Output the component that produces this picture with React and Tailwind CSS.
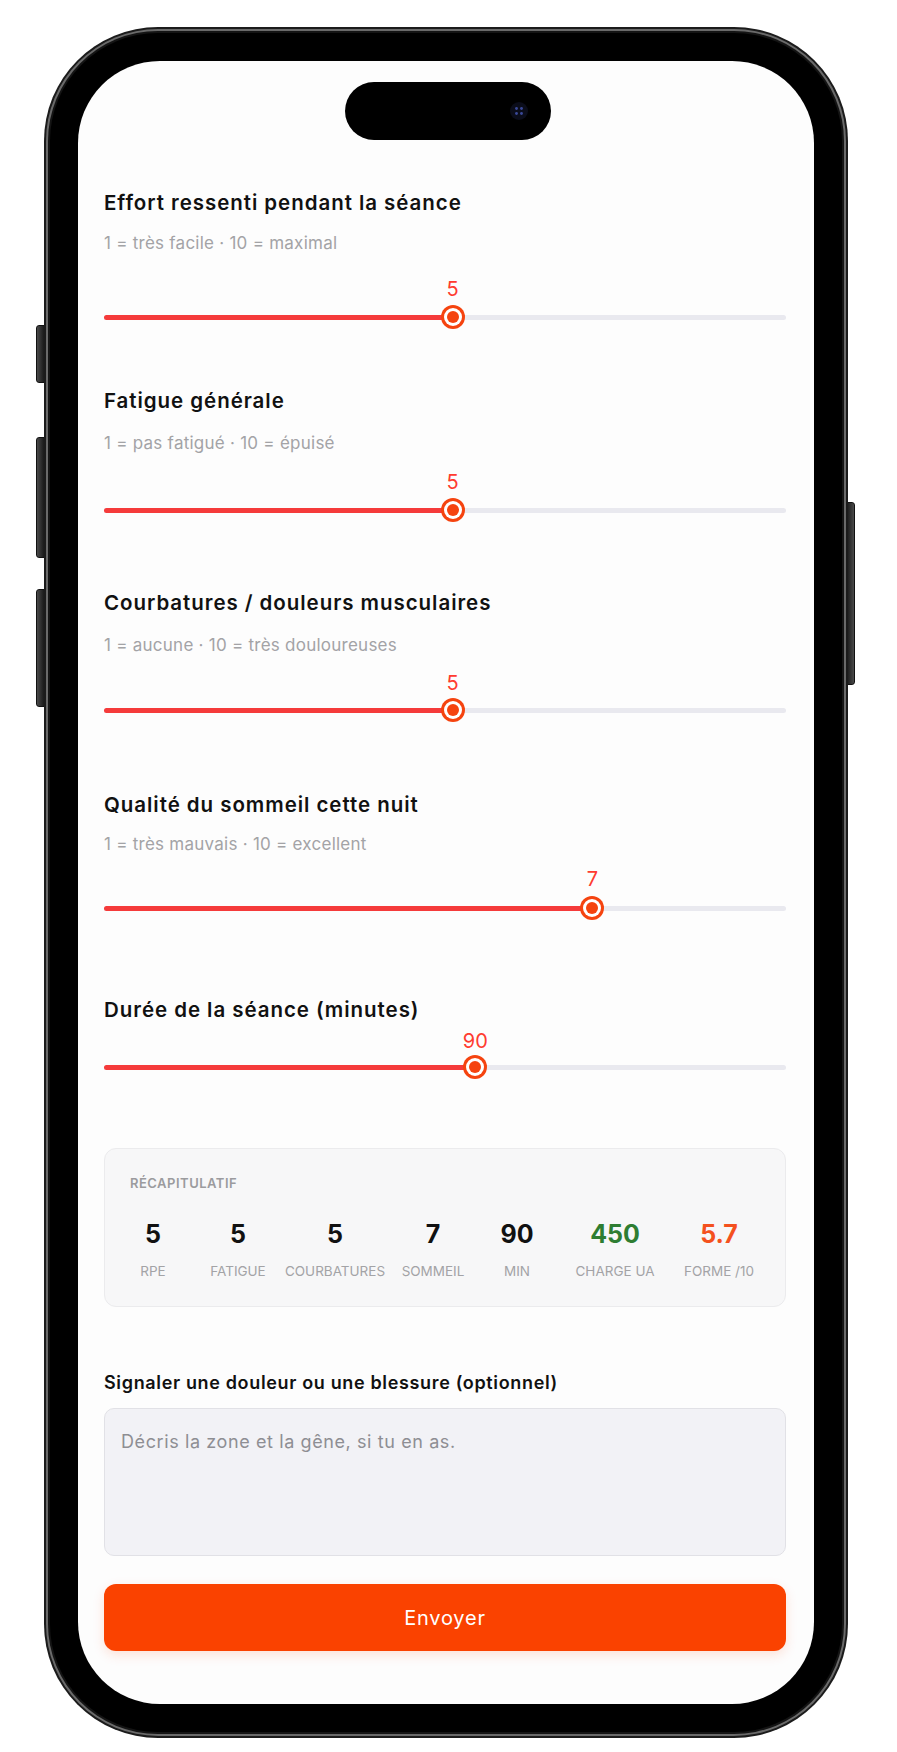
import React from "react";

const FONT = { fontFamily: "Inter, 'Noto Sans', 'Liberation Sans', sans-serif" };

function Slider({ title, sub, value, pct, sectionClass, subClass, valueClass, trackClass }) {
  return (
    <div className={sectionClass}>
      <div className="text-[20.5px] leading-[24px] font-semibold text-[#111111] tracking-[0.95px]">{title}</div>
      {sub && <div className={`${subClass} text-[17px] leading-[20px] tracking-[0.25px] text-[#a3a3a6]`}>{sub}</div>}
      <div className={`${valueClass} relative h-[22px]`}>
        <span
          className="absolute top-0 -translate-x-1/2 text-[20px] leading-[22px] text-[#ff3b30]"
          style={{ left: `${pct}%` }}
        >
          {value}
        </span>
      </div>
      <div className={`${trackClass} relative h-[24px]`}>
        <div className="absolute left-0 right-0 top-[9.5px] h-[5px] rounded-full bg-[#e9e9ef]" />
        <div className="absolute left-0 top-[9.5px] h-[5px] rounded-full bg-[#f53b3b]" style={{ width: `${pct}%` }} />
        <div
          className="absolute top-0 -translate-x-1/2 w-[24px] h-[24px] rounded-full bg-[#f5430f] flex items-center justify-center"
          style={{ left: `${pct}%` }}
        >
          <div className="w-[18px] h-[18px] rounded-full bg-white flex items-center justify-center">
            <div className="w-[12px] h-[12px] rounded-full bg-[#f5430f]" />
          </div>
        </div>
      </div>
    </div>
  );
}

function Stat({ v, label, color }) {
  return (
    <div className="flex flex-col items-center">
      <div className={`text-[25px] leading-[28px] font-bold ${color}`}>{v}</div>
      <div className="mt-[15px] text-[13.5px] leading-[16px] text-[#a3a3a6] whitespace-nowrap">{label}</div>
    </div>
  );
}

export default function App() {
  return (
    <div className="relative w-[897px] h-[1752px] bg-white overflow-hidden" style={FONT}>
      {/* side buttons */}
      <div className="absolute left-[36px] top-[325px] w-[9px] h-[58px] rounded-l-[3px] bg-gradient-to-r from-[#4a4a4a] to-[#1a1a1a] border border-[#111]" />
      <div className="absolute left-[36px] top-[437px] w-[9px] h-[121px] rounded-l-[3px] bg-gradient-to-r from-[#4a4a4a] to-[#1a1a1a] border border-[#111]" />
      <div className="absolute left-[36px] top-[589px] w-[9px] h-[118px] rounded-l-[3px] bg-gradient-to-r from-[#4a4a4a] to-[#1a1a1a] border border-[#111]" />
      <div className="absolute left-[846px] top-[502px] w-[9px] h-[183px] rounded-r-[3px] bg-gradient-to-l from-[#4a4a4a] to-[#1a1a1a] border border-[#111]" />

      <div className="ml-[44px] mt-[27px] w-[804px] h-[1711px] rounded-[114px] bg-[#1b1b1b] p-[2px] relative">
        <div className="w-full h-full rounded-[112px] bg-[#6a6a6a] p-[2px]">
          <div className="w-full h-full rounded-[110px] bg-[#141414] p-[2px]">
            <div className="w-full h-full rounded-[108px] bg-black p-[28px]">
              {/* screen */}
              <div className="w-full h-full rounded-[82px] bg-[#fdfdfd] overflow-hidden flex flex-col">
                {/* dynamic island */}
                <div className="mt-[21px] self-center ml-[3px] w-[206px] h-[58px] rounded-full bg-black flex items-center justify-end pr-[22px]">
                  <svg width="20" height="20" viewBox="0 0 20 20">
                    <circle cx="10" cy="10" r="9" fill="#0b0d1a" />
                    <circle cx="7.5" cy="7.5" r="1.4" fill="#3b4a9a" />
                    <circle cx="12.5" cy="7.5" r="1.4" fill="#3b4a9a" />
                    <circle cx="7.5" cy="12.5" r="1.4" fill="#3b4a9a" />
                    <circle cx="12.5" cy="12.5" r="1.4" fill="#3b4a9a" />
                  </svg>
                </div>

                <div className="pl-[26px] pr-[28px] flex flex-col">
                  <Slider
                    title="Effort ressenti pendant la séance"
                    sub="1 = très facile · 10 = maximal"
                    value="5"
                    pct={51.1}
                    sectionClass="mt-[51px]"
                    subClass="mt-[18px]"
                    valueClass="mt-[25px]"
                    trackClass="mt-[5px]"
                  />
                  <Slider
                    title="Fatigue générale"
                    sub="1 = pas fatigué · 10 = épuisé"
                    value="5"
                    pct={51.1}
                    sectionClass="mt-[60px]"
                    subClass="mt-[20px]"
                    valueClass="mt-[18px]"
                    trackClass="mt-[5px]"
                  />
                  <Slider
                    title="Courbatures / douleurs musculaires"
                    sub="1 = aucune · 10 = très douloureuses"
                    value="5"
                    pct={51.1}
                    sectionClass="mt-[69px]"
                    subClass="mt-[20px]"
                    valueClass="mt-[17px]"
                    trackClass="mt-[4px]"
                  />
                  <Slider
                    title="Qualité du sommeil cette nuit"
                    sub="1 = très mauvais · 10 = excellent"
                    value="7"
                    pct={71.6}
                    sectionClass="mt-[71px]"
                    subClass="mt-[17px]"
                    valueClass="mt-[14px]"
                    trackClass="mt-[6px]"
                  />
                  <Slider
                    title="Durée de la séance (minutes)"
                    value="90"
                    pct={54.45}
                    sectionClass="mt-[78px]"
                    valueClass="mt-[8px]"
                    trackClass="mt-[3px]"
                  />

                  {/* summary card */}
                  <div className="mt-[69px] h-[159px] rounded-[12px] border border-[#ebebed] bg-[#f7f7f8] pt-[26px] px-[11px]">
                    <div className="pl-[14px] text-[13px] leading-[16px] font-semibold tracking-[0.5px] text-[#9b9b9e]">RÉCAPITULATIF</div>
                    <div className="mt-[29px] grid grid-cols-[74px_96px_98px_98px_70px_126px_82px]">
                      <Stat v="5" label="RPE" color="text-[#111111]" />
                      <Stat v="5" label="FATIGUE" color="text-[#111111]" />
                      <Stat v="5" label="COURBATURES" color="text-[#111111]" />
                      <Stat v="7" label="SOMMEIL" color="text-[#111111]" />
                      <Stat v="90" label="MIN" color="text-[#111111]" />
                      <Stat v="450" label="CHARGE UA" color="text-[#2e7d32]" />
                      <Stat v="5.7" label="FORME /10" color="text-[#f4511e]" />
                    </div>
                  </div>

                  <div className="mt-[65px] text-[18px] leading-[22px] font-semibold tracking-[0.65px] text-[#111111]">
                    Signaler une douleur ou une blessure (optionnel)
                  </div>
                  <div className="mt-[14px] h-[148px] rounded-[10px] border border-[#e1e1e6] bg-[#f2f2f6] px-[16px] pt-[22px] text-[18px] leading-[22px] tracking-[0.6px] text-[#8e8e93]">
                    Décris la zone et la gêne, si tu en as.
                  </div>

                  <button className="mt-[28px] h-[67px] rounded-[12px] bg-[#fa4200] text-white text-[20px] tracking-[0.8px] shadow-[0_4px_12px_rgba(250,66,0,0.15)]">
                    Envoyer
                  </button>
                </div>
              </div>
            </div>
          </div>
        </div>
      </div>
    </div>
  );
}
